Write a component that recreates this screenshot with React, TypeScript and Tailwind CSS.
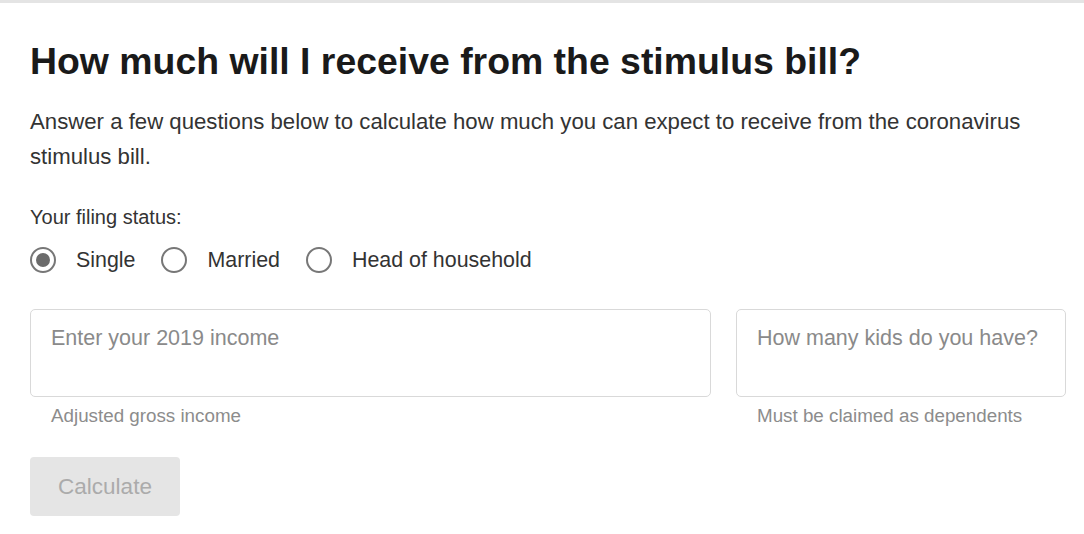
import { useState } from 'react';

const STATUSES = ['Single', 'Married', 'Head of household'];

export default function App() {
  const [status, setStatus] = useState('Single');
  const [income, setIncome] = useState('');
  const [kids, setKids] = useState('');

  return (
    <div className="min-h-[534px] w-[1084px] bg-white border-t-[3px] border-[#e4e4e4] font-['Liberation_Sans',Arial,sans-serif] text-[#262626]">
      <div className="pl-[30px] pr-[18px] pt-[36px]">
        <h1 className="text-[37.4px] leading-[44px] font-bold text-[#1a1a1a]">
          How much will I receive from the stimulus bill?
        </h1>
        <p className="mt-[21px] text-[22.2px] leading-[35px] text-[#333]">
          Answer a few questions below to calculate how much you can expect to receive from the coronavirus stimulus bill.
        </p>

        {/* Filing status */}
        <div className="mt-[31px] text-[20px] leading-[24px] text-[#333]">Your filing status:</div>
        <div className="mt-[11px] flex items-center h-[40px]">
          {STATUSES.map((s) => (
            <label key={s} className="flex items-center mr-[26px] cursor-pointer" onClick={() => setStatus(s)}>
              <span className="w-[26px] h-[26px] rounded-full border-2 border-[#777] flex items-center justify-center">
                {status === s && <span className="w-[14px] h-[14px] rounded-full bg-[#6b6b6b]" />}
              </span>
              <span className="ml-[20px] text-[21.4px] text-[#333]">{s}</span>
            </label>
          ))}
        </div>

        {/* Inputs */}
        <div className="mt-[29px] grid grid-cols-[681px_330px] gap-[25px]">
          <div>
            <input
              value={income}
              onChange={(e) => setIncome(e.target.value)}
              placeholder="Enter your 2019 income"
              className="w-full h-[88px] border border-[#d9d9d9] rounded-[5px] px-[20px] pb-[30px] text-[21.5px] placeholder:text-[#8a8a8a] outline-none"
            />
            <div className="mt-[7px] pl-[21px] text-[18.8px] leading-[24px] text-[#8c8c8c]">Adjusted gross income</div>
          </div>
          <div>
            <input
              value={kids}
              onChange={(e) => setKids(e.target.value)}
              placeholder="How many kids do you have?"
              className="w-full h-[88px] border border-[#d9d9d9] rounded-[5px] px-[20px] pb-[30px] text-[21.5px] placeholder:text-[#8a8a8a] outline-none"
            />
            <div className="mt-[7px] pl-[21px] text-[18.8px] leading-[24px] text-[#8c8c8c]">Must be claimed as dependents</div>
          </div>
        </div>

        <button
          disabled
          className="mt-[29px] w-[150px] h-[59px] rounded-[4px] bg-[#e5e5e5] text-[22.5px] text-[#ababab]"
        >
          Calculate
        </button>
      </div>
    </div>
  );
}
